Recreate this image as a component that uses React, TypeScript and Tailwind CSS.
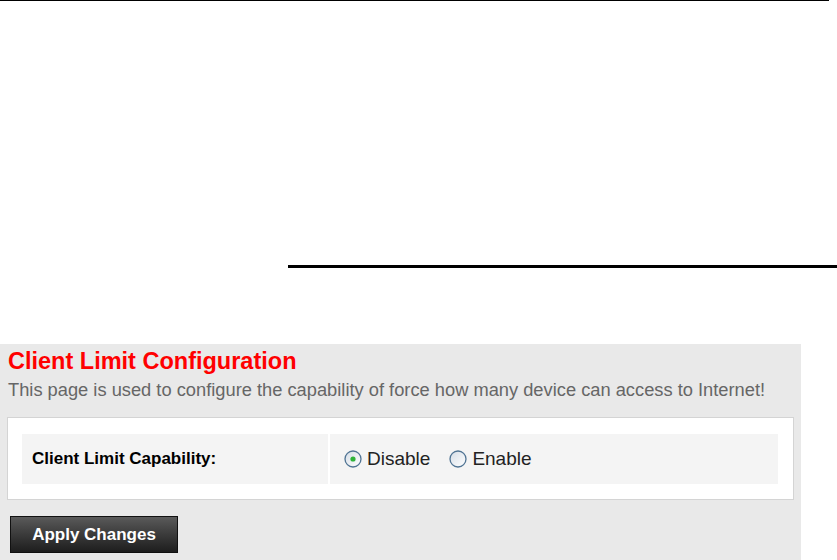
import React, { useState } from 'react';

function Radio({ checked }: { checked: boolean }) {
  return (
    <svg width="18" height="18" viewBox="0 0 18 18" className="shrink-0">
      <defs>
        <linearGradient id={checked ? 'rg1' : 'rg2'} x1="0" y1="0" x2="1" y2="1">
          <stop offset="0" stopColor="#d5dde6" />
          <stop offset="1" stopColor="#ffffff" />
        </linearGradient>
      </defs>
      <circle cx="9" cy="9" r="8" fill={`url(#${checked ? 'rg1' : 'rg2'})`} stroke="#4f7393" strokeWidth="1.3" />
      {checked && <circle cx="9" cy="9" r="2.6" fill="#2fb33a" />}
    </svg>
  );
}

export default function App() {
  const [enabled, setEnabled] = useState(false);

  return (
    <div className="w-[837px] h-[560px] bg-white overflow-hidden font-['Liberation_Sans',Arial,sans-serif]">
      <div className="h-px w-[829px] bg-black" />
      <div className="ml-[288px] mt-[264px] h-[3px] bg-black" />

      {/* config panel */}
      <div className="mt-[76px] w-[801px] h-[216px] bg-[#e9e9e9] pt-[5px]">
        <h1 className="pl-2 text-[23.5px] leading-[24px] font-bold text-[#ff0000]">Client Limit Configuration</h1>
        <p className="pl-2 mt-2 text-[18.3px] leading-[18px] text-[#666666] whitespace-nowrap">
          This page is used to configure the capability of force how many device can access to Internet!
        </p>

        <div className="ml-[7px] mt-[18px] w-[787px] bg-white border border-[#d4d4d4] pl-[14px] pr-[15px] pt-4 pb-[15px] flex gap-[2px]">
          <div className="w-[306px] h-[50px] bg-[#f4f4f4] flex items-center pl-[10px] text-[17px] font-bold text-black">
            Client Limit Capability:
          </div>
          <div className="flex-1 h-[50px] bg-[#f4f4f4] flex items-center pl-[14px] text-[19px] text-[#222]">
            <label className="flex items-center gap-[5px] cursor-pointer" onClick={() => setEnabled(false)}>
              <Radio checked={!enabled} />
              Disable
            </label>
            <label className="flex items-center gap-[5px] ml-[19px] cursor-pointer" onClick={() => setEnabled(true)}>
              <Radio checked={enabled} />
              Enable
            </label>
          </div>
        </div>

        <button className="ml-[10px] mt-4 w-[168px] h-[37px] border border-[#111] bg-gradient-to-b from-[#5a5a5a] to-[#1e1e1e] text-white text-[17px] font-bold">
          Apply Changes
        </button>
      </div>
    </div>
  );
}
